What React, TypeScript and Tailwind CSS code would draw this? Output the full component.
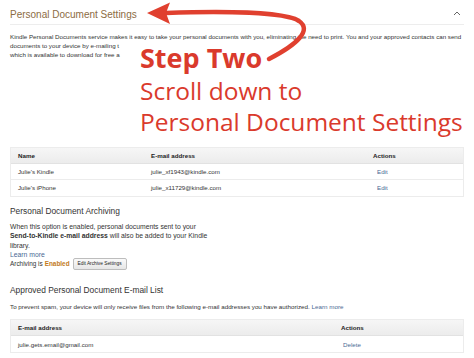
import React from 'react';

const sans = { fontFamily: '"Liberation Sans", Arial, sans-serif' };

const Arrow: React.FC = () => (
  <svg className="absolute left-0 top-0 pointer-events-none" width="474" height="80" viewBox="0 0 474 80">
    <path d="M166 13 C225 11 285 12 299 21 C312 30 298 44 269 59" fill="none" stroke="#e0402f" strokeWidth="4.5" strokeLinecap="round" />
    <path d="M147 13 L170 2.5 L166 13 L170 24 Z" fill="#e0402f" />
  </svg>
);

const Table: React.FC<{ cols: string; head: string[]; rows: string[][]; lastPad?: string }> = ({ cols, head, rows, lastPad = 'pl-[4px]' }) => (
  <div className="mx-[10px] border border-[#ececec] bg-white">
    <div className={`grid ${cols} pl-[7px] h-[16px] items-center bg-gradient-to-b from-[#f6f6f6] to-[#ececec] border-b border-[#e2e2e2] text-[6.2px] font-bold text-[#222]`}>
      {head.map((h) => (
        <div key={h}>{h}</div>
      ))}
    </div>
    {rows.map((r, i) => (
      <div key={i} className={`grid ${cols} pl-[7px] h-[16px] items-center border-b border-[#ececec] last:border-b-0 text-[6.2px] text-[#333]`}>
        {r.map((c, j) =>
          j === r.length - 1 ? (
            <div key={j} className={`${lastPad} text-[#4a6a94]`}>{c}</div>
          ) : (
            <div key={j}>{c}</div>
          )
        )}
      </div>
    ))}
  </div>
);

const App: React.FC = () => {
  return (
    <div className="relative w-[474px] h-[358px] bg-white overflow-hidden" style={sans}>
      {/* En-tête de section */}
      <div className="mx-[10px] h-[25px] flex items-center justify-between border-b border-[#ededed]">
        <span className="text-[10px] text-[#8d6c43] pt-[4px]">Personal Document Settings</span>
        <svg width="8" height="6" viewBox="0 0 8 6" className="mr-[3px] mt-[2px]">
          <path d="M1 5 L4 2 L7 5" fill="none" stroke="#666" strokeWidth="1" />
        </svg>
      </div>

      <div className="mx-[10px] mt-[7px] text-[6.2px] leading-[9px] text-[#333]">
        <div className="whitespace-nowrap">Kindle Personal Documents service makes it easy to take your personal documents with you, eliminating the need to print. You and your approved contacts can send</div>
        <div className="whitespace-nowrap">documents to your device by e-mailing t</div>
        <div className="whitespace-nowrap">which is available to download for free a</div>
      </div>

      <div className="mt-[88px]">
        <Table
          cols="grid-cols-[133px_222px_1fr]"
          head={['Name', 'E-mail address', 'Actions']}
          rows={[
            ["Julie's Kindle", 'julie_xf1943@kindle.com', 'Edit'],
            ["Julie's iPhone", 'julie_x11729@kindle.com', 'Edit'],
          ]}
        />
      </div>

      {/* Archivage */}
      <div className="mx-[10px] mt-[9px] text-[8.4px] leading-[11px] text-[#333]">Personal Document Archiving</div>
      <div className="mx-[10px] mt-[5px] text-[6.8px] leading-[9.3px] text-[#333]">
        <div>When this option is enabled, personal documents sent to your</div>
        <div>
          <b>Send-to-Kindle e-mail address</b> will also be added to your Kindle
        </div>
        <div>library.</div>
        <div className="text-[#4a6a94]">Learn more</div>
        <div className="flex items-center h-[9.3px] text-[6.4px]">
          <span>Archiving is</span>
          <b className="ml-[2px] text-[#c27a1c]">Enabled</b>
          <span className="ml-[3px] h-[12px] px-[4px] flex items-center border border-[#bdbdbd] rounded-[2px] bg-gradient-to-b from-[#fafafa] to-[#e6e6e6] text-[4.8px] text-[#222]">
            Edit Archive Settings
          </span>
        </div>
      </div>

      {/* Liste e-mail approuvée */}
      <div className="mx-[10px] mt-[17px] text-[8.4px] leading-[11px] text-[#333]">Approved Personal Document E-mail List</div>
      <div className="mx-[10px] mt-[6px] text-[6.25px] leading-[9px] text-[#333] whitespace-nowrap">
        To prevent spam, your device will only receive files from the following e-mail addresses you have authorized.{' '}
        <span className="text-[#4a6a94]">Learn more</span>
      </div>
      <div className="mt-[8px]">
        <Table
          cols="grid-cols-[323px_1fr]"
          head={['E-mail address', 'Actions']}
          rows={[['julie.gets.email@gmail.com', 'Delete']]}
          lastPad="pl-[2px]"
        />
      </div>

      {/* Annotation */}
      <Arrow />
      <div className="absolute left-[140px] top-[41px] text-[#da3a2c]" style={{ fontFamily: '"Open Sans", sans-serif' }}>
        <div className="text-[27px] leading-[34px] font-bold">Step Two</div>
        <div className="text-[24.5px] leading-[31px]">Scroll down to</div>
        <div className="text-[24.5px] leading-[31px] whitespace-nowrap">Personal Document Settings</div>
      </div>
    </div>
  );
};

export default App;
